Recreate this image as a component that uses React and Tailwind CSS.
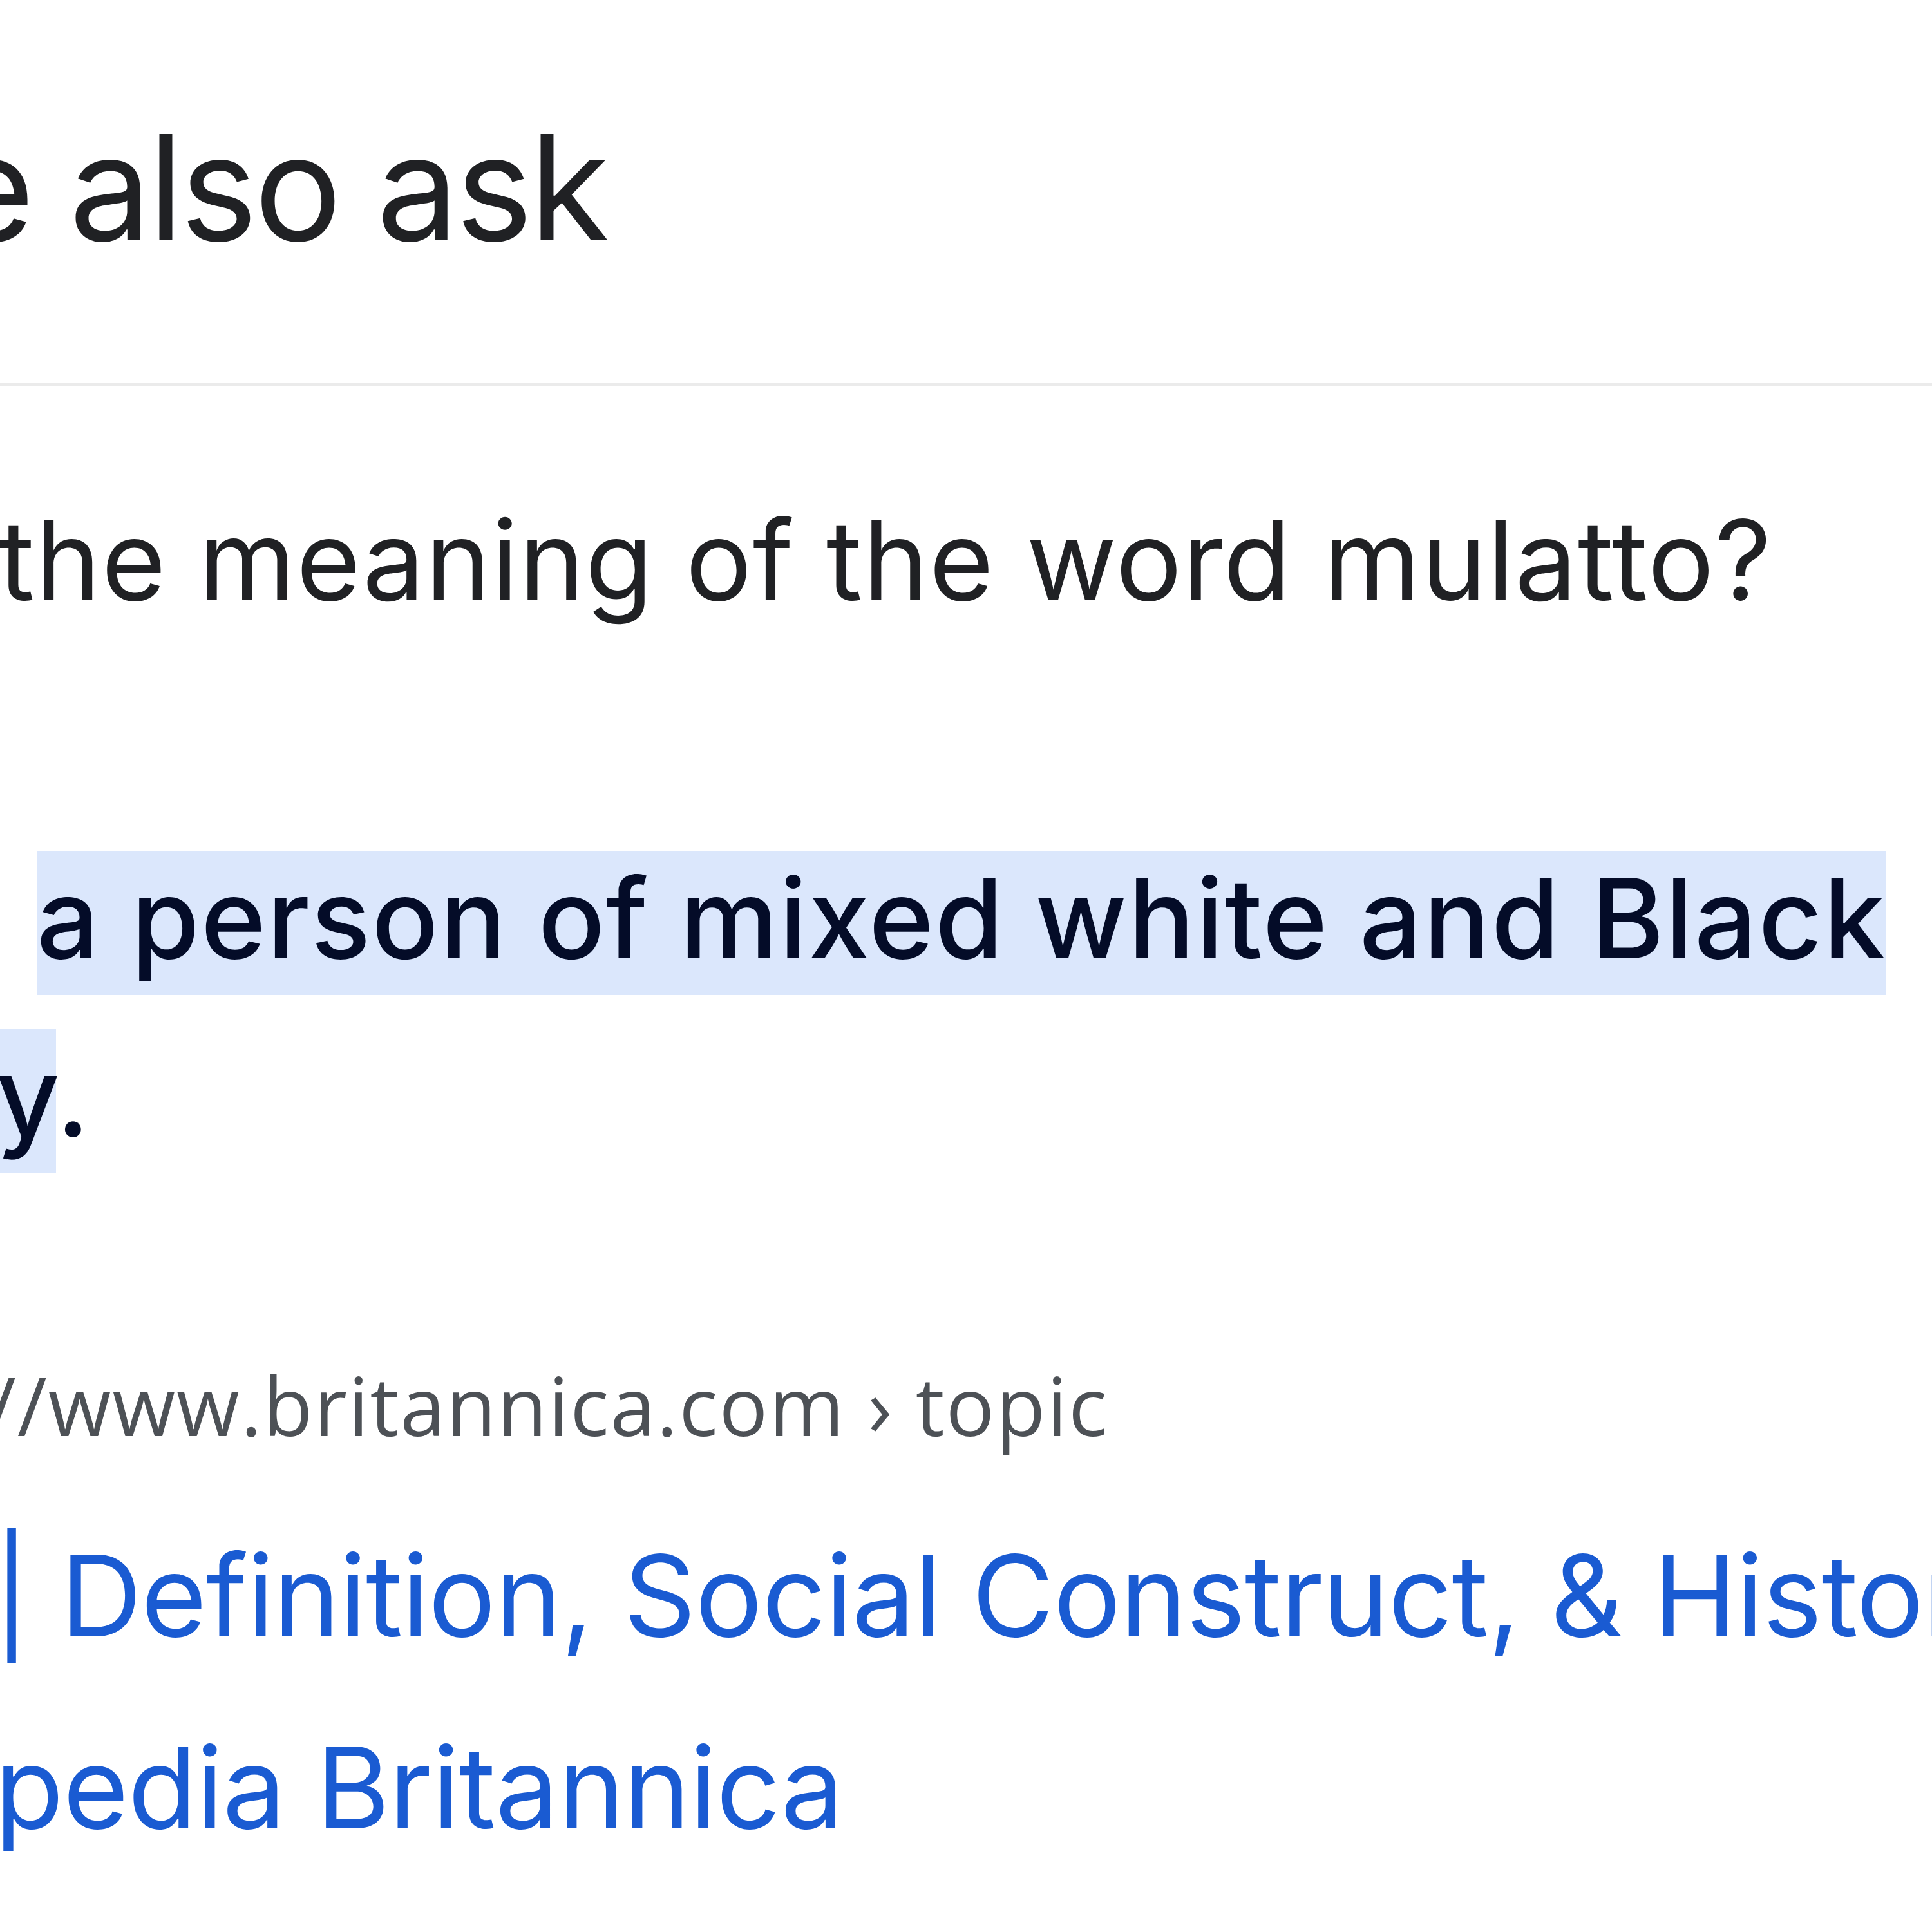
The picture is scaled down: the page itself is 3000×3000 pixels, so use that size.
export default function App() {
  return (
    <div className="w-[3000px] h-[3000px] overflow-hidden bg-white font-['Inter',sans-serif]">
      <div className="flex flex-col">
        {/* People also ask */}
        <div className="pt-[153px] -ml-[660px] whitespace-nowrap text-[227px] leading-[275px] text-[#202124] tracking-[-0.022em]">
          People also ask
        </div>

        <div className="mt-[167px] h-[5px] w-full bg-[#ebebeb]" />

        {/* question */}
        <div className="mt-[165px] -ml-[664px] whitespace-nowrap text-[172px] leading-[208px] text-[#202124] tracking-[0.006em]">
          What is the meaning of the word mulatto?
        </div>

        {/* featured answer */}
        <div className="mt-[314px] text-[172px] leading-[277px] text-[#040c28] font-medium tracking-[0.01em]">
          <div className="-ml-[671px] whitespace-nowrap">
            Mulatto, <span className="bg-[#dbe7fc] pb-[16px]">a person of mixed white and Black</span>
          </div>
          <div className="-ml-[640px] whitespace-nowrap">
            <span className="bg-[#dbe7fc] pb-[16px]">ancestry</span>.
          </div>
        </div>

        {/* source url */}
        <div className="mt-[267px] -ml-[370px] whitespace-nowrap font-['Open_Sans',sans-serif] text-[126px] leading-[146px] text-[#4d5156] tracking-[0.015em]">
          https://www.britannica.com › topic
        </div>

        {/* result title */}
        <div className="mt-[74px] text-[175px] leading-[298px] text-[#1a5bd2] tracking-[-0.007em]">
          <div className="-ml-[666px] whitespace-nowrap">
            Mulatto | Definition, Social Construct, &amp; History |
          </div>
          <div className="-ml-[647px] whitespace-nowrap">Encyclopedia Britannica</div>
        </div>
      </div>
    </div>
  );
}
